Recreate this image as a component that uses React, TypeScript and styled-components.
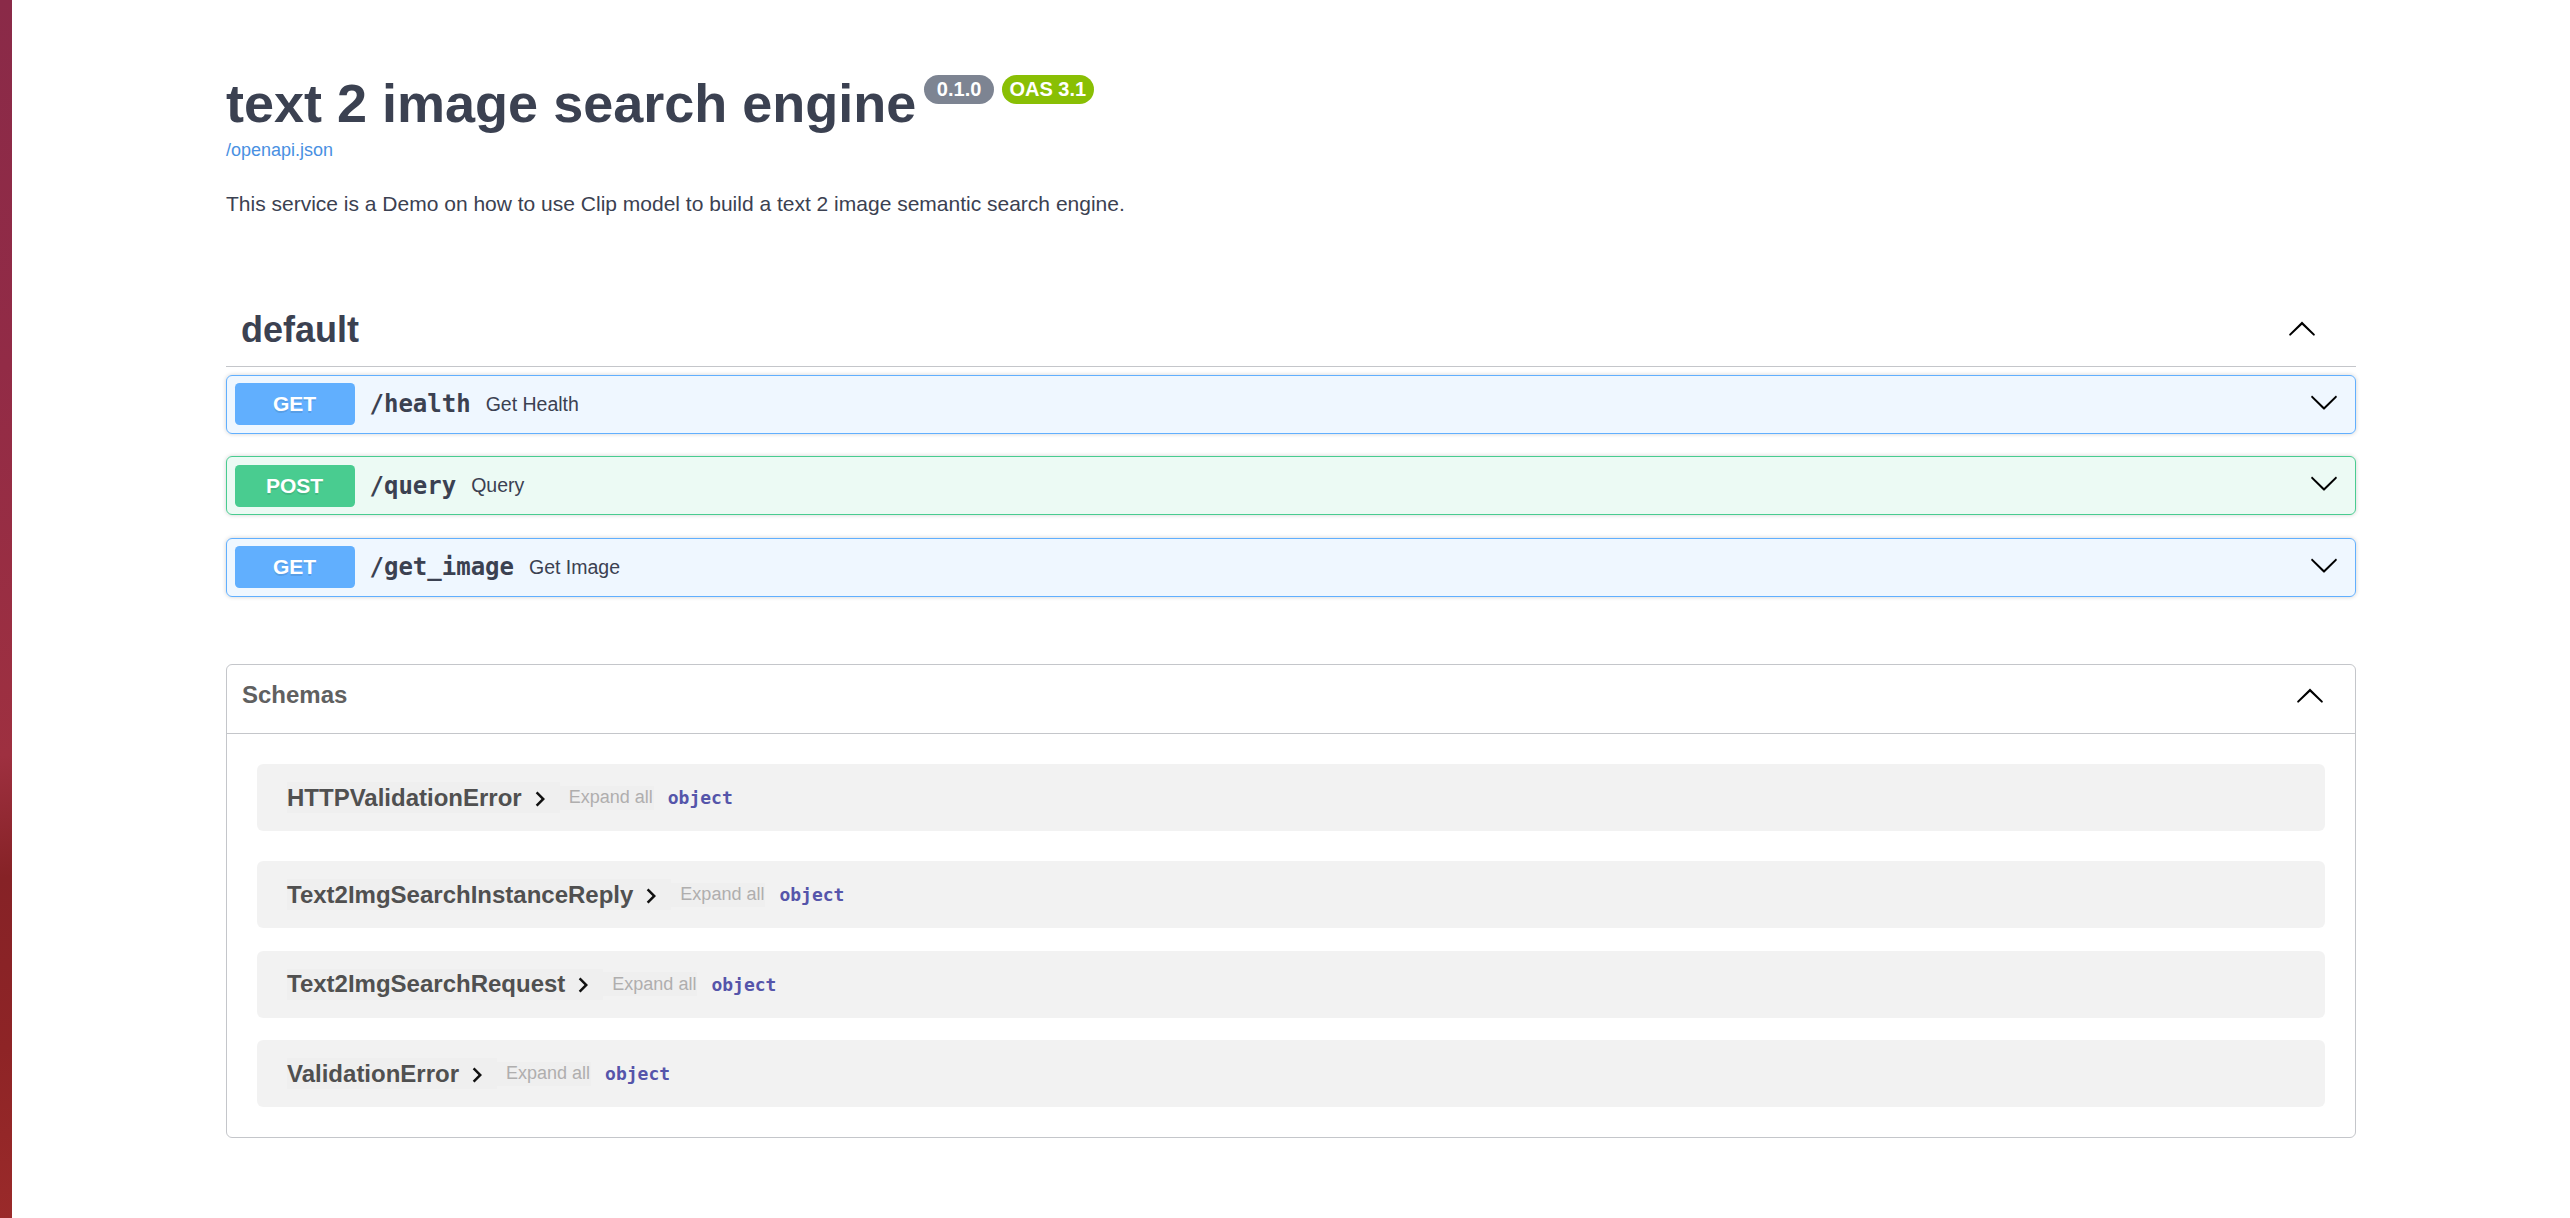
import React from "react";
import styled, { createGlobalStyle, css } from "styled-components";

const GlobalStyle = createGlobalStyle`
  html, body {
    margin: 0;
    padding: 0;
    background: #ffffff;
  }
  body {
    font-family: "Liberation Sans", Arial, sans-serif;
  }
  * { box-sizing: border-box; }
`;

const Page = styled.div`
  display: flex;
  min-height: 100vh;
`;

const Wallpaper = styled.div`
  flex: 0 0 12px;
  width: 12px;
  background: linear-gradient(
    172deg,
    #8a2a48 0%,
    #922b46 30%,
    #9e3040 62%,
    #862226 72%,
    #8e2426 86%,
    #9a2a2a 100%
  );
`;

const Main = styled.main`
  flex: 1;
  min-width: 0;
`;

const Wrapper = styled.div`
  max-width: 2190px;
  margin: 0 auto;
  padding: 0 30px;
`;

const Info = styled.section`
  margin: 72px 0 78px;
`;

const HGroup = styled.hgroup`
  display: block;
  margin: 0 0 30px;
  font-size: 24px;
`;

const Title = styled.h2`
  margin: 0;
  font-size: 54px;
  font-weight: 700;
  color: #3b4151;
`;

const Badge = styled.small<{ $stamp?: boolean }>`
  display: inline-block;
  position: relative;
  top: -7.5px;
  vertical-align: super;
  margin: 0 0 0 7.5px;
  padding: 3px 7.5px;
  border-radius: 85px;
  font-size: 20px;
  background: ${(p) => (p.$stamp ? "#89bf04" : "#7d8492")};
`;

const BadgeText = styled.pre`
  margin: 0;
  padding: 0;
  font-family: "Liberation Sans", Arial, sans-serif;
  font-weight: 700;
  color: #ffffff;
`;

const SpecLink = styled.a`
  font-size: 18px;
  color: #4990e2;
  text-decoration: none;
`;

const Description = styled.p`
  margin: 0;
  font-size: 21px;
  color: #3b4151;
`;

const TagSection = styled.div`
  display: flex;
  flex-direction: column;
`;

const TagHeader = styled.h3`
  display: flex;
  align-items: center;
  margin: 0 0 7.5px;
  padding: 15px 30px 15px 15px;
  border-bottom: 1px solid rgba(59, 65, 81, 0.3);
  font-size: 36px;
  font-weight: 700;
  color: #3b4151;
`;

const TagName = styled.span`
  flex: 1;
`;

const ArrowButton = styled.button`
  background: none;
  border: none;
  padding: 1.5px 9px;
  font-family: "Liberation Sans", Arial, sans-serif;
  font-size: 20px;
  line-height: normal;
  cursor: pointer;
  svg {
    display: inline;
    vertical-align: baseline;
  }
`;

type Method = "get" | "post";

const methodColors: Record<Method, { main: string; bg: string }> = {
  get: { main: "#61affe", bg: "rgba(97,175,254,.1)" },
  post: { main: "#49cc90", bg: "rgba(73,204,144,.1)" },
};

const OpBlock = styled.div<{ $method: Method }>`
  margin: 0 0 22.5px;
  border: 1px solid ${(p) => methodColors[p.$method].main};
  border-radius: 6px;
  box-shadow: 0 0 4.5px rgba(0, 0, 0, 0.19);
  background: ${(p) => methodColors[p.$method].bg};
`;

const Summary = styled.div`
  display: flex;
  align-items: center;
  padding: 7.5px;
`;

const MethodBadge = styled.span<{ $method: Method }>`
  min-width: 120px;
  padding: 9px 0;
  border-radius: 4.5px;
  background: ${(p) => methodColors[p.$method].main};
  color: #ffffff;
  font-size: 21px;
  font-weight: 700;
  text-align: center;
  text-shadow: 0 1.5px 0 rgba(0, 0, 0, 0.1);
`;

const Path = styled.span`
  display: flex;
  align-items: center;
  padding: 0 15px;
  font-family: "DejaVu Sans Mono", "Liberation Mono", monospace;
  font-size: 24px;
  font-weight: 700;
  color: #3b4151;
`;

const OpDescription = styled.div`
  flex: 1 1 auto;
  font-size: 19.5px;
  color: #3b4151;
`;

const Models = styled.section`
  margin: 45px 0;
  padding: 0 0 30px;
  border: 1px solid rgba(59, 65, 81, 0.3);
  border-radius: 6px;
`;

const ModelsHeader = styled.h4`
  display: flex;
  align-items: center;
  margin: 0 0 7.5px;
  padding: 15px 30px 23px 15px;
  border-bottom: 1px solid rgba(59, 65, 81, 0.3);
  font-size: 24px;
  font-weight: 700;
  color: #606060;
  span {
    flex: 1;
  }
  svg {
    display: block;
  }
`;

const ModelRow = styled.div<{ $first?: boolean; $last?: boolean }>`
  display: flex;
  align-items: center;
  margin: 0 30px 22.5px;
  padding: 18px 0 18px 30px;
  border-radius: 6px;
  background: rgba(0, 0, 0, 0.05);
  ${(p) =>
    p.$first &&
    css`
      margin: 30px;
    `}
  ${(p) =>
    p.$last &&
    css`
      margin: 0 30px;
    `}
`;

const Accordion = styled.button`
  display: inline-flex;
  align-items: center;
  padding: 1.5px 5px 1.5px 0;
  border: none;
  background: #efefef;
  font-family: "Liberation Sans", Arial, sans-serif;
  font-size: 24px;
  font-weight: 700;
  line-height: normal;
  color: #505050;
  cursor: pointer;
  svg {
    margin: -3px 0 -5px 3px;
    flex: none;
  }
`;

const ExpandButton = styled.button`
  padding: 1.5px 1px 1.5px 9px;
  border: none;
  background: #efefef;
  font-family: "Liberation Sans", Arial, sans-serif;
  font-size: 18px;
  line-height: normal;
  color: #afaeae;
  cursor: pointer;
`;

const TypeLabel = styled.span`
  padding-left: 14px;
  font-family: "DejaVu Sans Mono", "Liberation Mono", monospace;
  font-size: 18px;
  font-weight: 700;
  color: #55a;
`;

const ArrowDown = () => (
  <svg width="30" height="30" viewBox="0 0 20 20" aria-hidden="true">
    <path d="M17.418 6.109c.272-.268.709-.268.979 0s.271.701 0 .969l-7.908 7.83c-.27.268-.707.268-.979 0l-7.908-7.830c-.27-.268-.27-.701 0-.969.271-.268.709-.268.979 0L10 13.25l7.418-7.141z" />
  </svg>
);

const ArrowUp = () => (
  <svg width="30" height="30" viewBox="0 0 20 20" aria-hidden="true">
    <path d="M17.418 14.908c.272.268.709.268.979 0s.271-.701 0-.969l-7.908-7.83c-.27-.268-.707-.268-.979 0l-7.908 7.830c-.27.268-.27.701 0 .969.271.268.709.268.979 0L10 7.757l7.418 7.151z" />
  </svg>
);

const ChevronRight = () => (
  <svg width="30" height="30" viewBox="0 0 24 24" aria-hidden="true">
    <path d="M10 6 8.59 7.41 13.17 12l-4.58 4.59L10 18l6-6z" fill="#111" />
  </svg>
);

const operations: { method: Method; path: string; summary: string }[] = [
  { method: "get", path: "/health", summary: "Get Health" },
  { method: "post", path: "/query", summary: "Query" },
  { method: "get", path: "/get_image", summary: "Get Image" },
];

const schemas = [
  "HTTPValidationError",
  "Text2ImgSearchInstanceReply",
  "Text2ImgSearchRequest",
  "ValidationError",
];

export default function App() {
  return (
    <>
      <GlobalStyle />
      <Page>
        <Wallpaper />
        <Main>
          <Wrapper>
            <Info>
              <HGroup>
                <Title>
                  text 2 image search engine
                  <Badge>
                    <BadgeText> 0.1.0 </BadgeText>
                  </Badge>
                  <Badge $stamp>
                    <BadgeText>OAS 3.1</BadgeText>
                  </Badge>
                </Title>
                <SpecLink href="#">/openapi.json</SpecLink>
              </HGroup>
              <Description>
                This service is a Demo on how to use Clip model to build a text 2 image semantic search engine.
              </Description>
            </Info>

            <TagSection>
              <TagHeader>
                <TagName>default</TagName>
                <ArrowButton aria-label="Collapse operation">
                  <ArrowUp />
                </ArrowButton>
              </TagHeader>
              {operations.map((op) => (
                <OpBlock key={op.path} $method={op.method}>
                  <Summary>
                    <MethodBadge $method={op.method}>{op.method.toUpperCase()}</MethodBadge>
                    <Path>{op.path}</Path>
                    <OpDescription>{op.summary}</OpDescription>
                    <ArrowButton aria-label="Expand operation">
                      <ArrowDown />
                    </ArrowButton>
                  </Summary>
                </OpBlock>
              ))}
            </TagSection>

            <Models>
              <ModelsHeader>
                <span>Schemas</span>
                <ArrowUp />
              </ModelsHeader>
              {schemas.map((name, i) => (
                <ModelRow key={name} $first={i === 0} $last={i === schemas.length - 1}>
                  <Accordion>
                    {name}
                    <ChevronRight />
                  </Accordion>
                  <ExpandButton>Expand all</ExpandButton>
                  <TypeLabel>object</TypeLabel>
                </ModelRow>
              ))}
            </Models>
          </Wrapper>
        </Main>
      </Page>
    </>
  );
}
